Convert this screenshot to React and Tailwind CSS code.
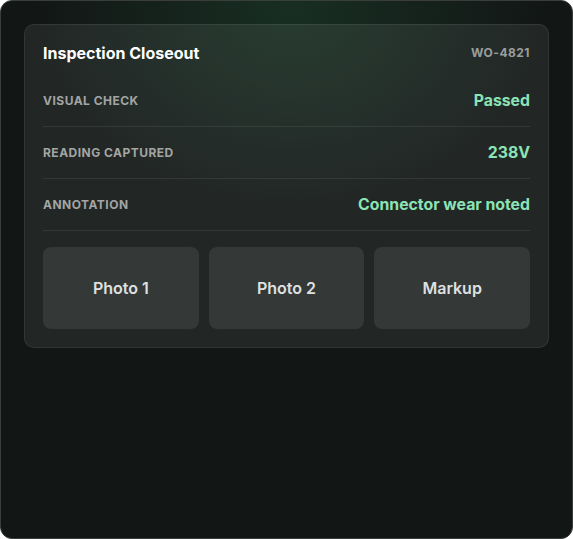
export default function App() {
    const rows = [
        { label: 'Visual check', value: 'Passed' },
        { label: 'Reading captured', value: '238V' },
        { label: 'Annotation', value: 'Connector wear noted' },
    ];
    const tiles = ['Photo 1', 'Photo 2', 'Markup'];

    return (
        <div
            className="w-[573px] h-[539px] rounded-xl border border-[#393e3d] bg-[#121615] bg-[radial-gradient(ellipse_260px_200px_at_290px_10px,rgba(40,110,70,0.28),transparent)] p-[23px]"
            style={{ fontFamily: 'Inter, "Noto Sans", sans-serif' }}
        >
            {/* Card */}
            <div className="rounded-[10px] border border-white/[0.08] bg-white/[0.07] px-[18px] pt-[18px] pb-[18px]">
                <div className="flex items-center justify-between h-5 mb-3">
                    <h2 className="text-[16px] font-bold text-white">Inspection Closeout</h2>
                    <span className="text-[12px] font-bold tracking-[0.04em] text-[#9b9e9d]">WO-4821</span>
                </div>

                {rows.map((row) => (
                    <div
                        key={row.label}
                        className="flex items-center justify-between h-[52px] border-b border-white/[0.08]"
                    >
                        <span className="text-[12px] font-bold uppercase tracking-[0.04em] text-[#a2a5a4]">
                            {row.label}
                        </span>
                        <span className="text-[15.8px] font-bold text-[#8be3b6]">{row.value}</span>
                    </div>
                ))}

                <div className="grid grid-cols-3 gap-2.5 mt-4">
                    {tiles.map((t) => (
                        <div
                            key={t}
                            className="h-[82px] rounded-lg bg-[#343837] flex items-center justify-center text-[16px] font-semibold text-[#dfe0e0]"
                        >
                            {t}
                        </div>
                    ))}
                </div>
            </div>
        </div>
    );
}
